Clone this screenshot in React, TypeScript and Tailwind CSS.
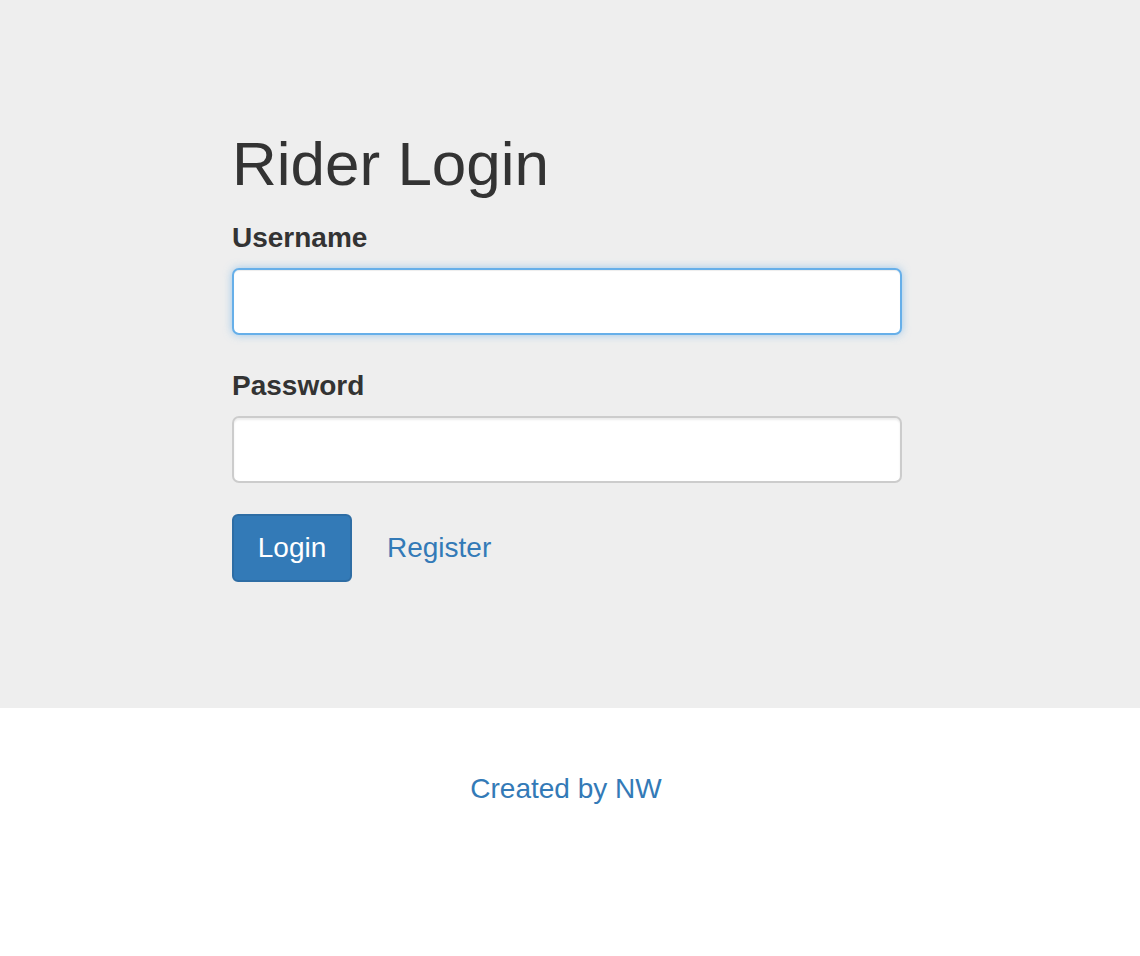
import React from "react";

export default function App() {
  return (
    <div className="min-h-[956px] bg-white font-['Liberation_Sans','Helvetica_Neue',Arial,sans-serif] text-[#333]">
      <div className="h-[708px] bg-[#eee] pl-[232px] pt-[130px]">
        <div className="w-[670px]">
          <h1 className="text-[62px] font-normal leading-[1.1]">Rider Login</h1>
          <label className="mt-[20px] mb-[10px] block text-[28px] font-bold leading-[40px]">Username</label>
          <input
            type="text"
            className="block h-[67px] w-full rounded-[7px] border-2 border-[#66afe9] bg-white shadow-[inset_0_1px_1px_rgba(0,0,0,0.075),0_0_8px_rgba(102,175,233,0.6)] outline-none"
          />
          <label className="mt-[31px] mb-[10px] block text-[28px] font-bold leading-[40px]">Password</label>
          <input
            type="password"
            className="block h-[67px] w-full rounded-[7px] border-2 border-[#ccc] bg-white shadow-[inset_0_2px_2px_rgba(0,0,0,0.075)] outline-none"
          />
          <div className="mt-[31px] flex items-center">
            <button className="h-[68px] w-[120px] rounded-[6px] border-2 border-[#2e6da4] bg-[#337ab7] text-[28px] leading-[40px] text-white">
              Login
            </button>
            <a href="#" className="ml-[35px] text-[28px] leading-[40px] text-[#337ab7]">
              Register
            </a>
          </div>
        </div>
      </div>
      <div className="pt-[61px] pr-[8px] text-center">
        <a href="#" className="text-[28px] leading-[40px] text-[#337ab7]">
          Created by NW
        </a>
      </div>
    </div>
  );
}
